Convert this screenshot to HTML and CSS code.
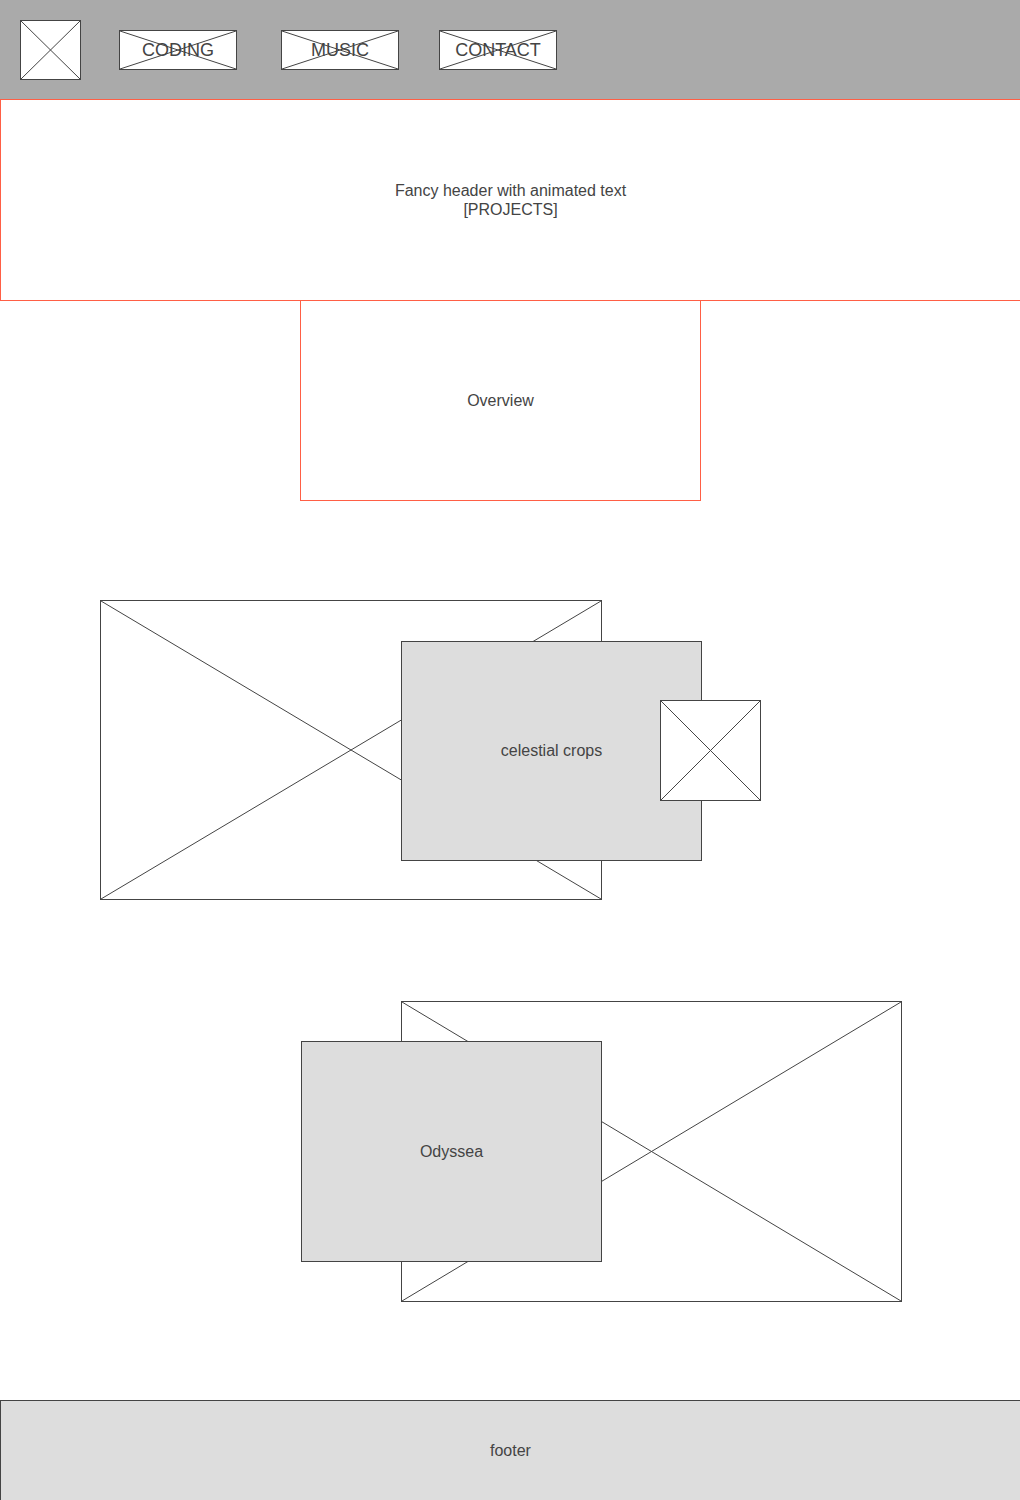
FILE: index.html
```html
<!DOCTYPE html>
<html lang="en">
<head>
    <meta charset="UTF-8">
    <meta name="viewport" content="width=device-width, initial-scale=1.0">
    <title>Projects</title>
    <link rel="stylesheet" href="styles.css">
</head>
<body>
    <nav class="nav">
        <a href="#" class="logo">
            <svg class="cross" viewBox="0 0 10 10" preserveAspectRatio="none"><line x1="0" y1="0" x2="10" y2="10"/><line x1="10" y1="0" x2="0" y2="10"/></svg>
        </a>
        <a href="#" class="nav-btn">
            <svg class="cross" viewBox="0 0 10 10" preserveAspectRatio="none"><line x1="0" y1="0" x2="10" y2="10"/><line x1="10" y1="0" x2="0" y2="10"/></svg>
            <span>CODING</span>
        </a>
        <a href="#" class="nav-btn">
            <svg class="cross" viewBox="0 0 10 10" preserveAspectRatio="none"><line x1="0" y1="0" x2="10" y2="10"/><line x1="10" y1="0" x2="0" y2="10"/></svg>
            <span>MUSIC</span>
        </a>
        <a href="#" class="nav-btn">
            <svg class="cross" viewBox="0 0 10 10" preserveAspectRatio="none"><line x1="0" y1="0" x2="10" y2="10"/><line x1="10" y1="0" x2="0" y2="10"/></svg>
            <span>CONTACT</span>
        </a>
    </nav>

    <header class="hero">
        <p>Fancy header with animated text<br>[PROJECTS]</p>
    </header>

    <section class="overview">
        <p>Overview</p>
    </section>

    <!-- project cards -->
    <section class="project project-left">
        <div class="shot">
            <svg class="cross" viewBox="0 0 10 10" preserveAspectRatio="none"><line x1="0" y1="0" x2="10" y2="10"/><line x1="10" y1="0" x2="0" y2="10"/></svg>
            <div class="caption">celestial crops</div>
            <div class="thumb">
                <svg class="cross" viewBox="0 0 10 10" preserveAspectRatio="none"><line x1="0" y1="0" x2="10" y2="10"/><line x1="10" y1="0" x2="0" y2="10"/></svg>
            </div>
        </div>
    </section>

    <section class="project project-right">
        <div class="shot">
            <svg class="cross" viewBox="0 0 10 10" preserveAspectRatio="none"><line x1="0" y1="0" x2="10" y2="10"/><line x1="10" y1="0" x2="0" y2="10"/></svg>
            <div class="caption">Odyssea</div>
        </div>
    </section>

    <footer class="footer">footer</footer>
</body>
</html>
```

FILE: styles.css
```css
body {
    font-family: "Liberation Sans", Arial, sans-serif;
    margin: 0;
    color: #444;
    background: #fff;
    overflow-x: hidden;
}
p {
    margin: 0;
}
.cross {
    position: absolute;
    inset: 0;
    width: 100%;
    height: 100%;
}
.cross line {
    stroke: #444;
    stroke-width: 1;
    vector-effect: non-scaling-stroke;
}

.nav {
    height: 99px;
    background: #aaa;
    display: flex;
    align-items: center;
    padding-left: 20px;
    box-sizing: border-box;
}
.logo {
    position: relative;
    width: 61px;
    height: 60px;
    box-sizing: border-box;
    border: 1px solid #444;
    background: #fff;
    margin-right: 38px;
    margin-top: 1px;
}
.nav-btn {
    position: relative;
    width: 118px;
    height: 40px;
    box-sizing: border-box;
    border: 1px solid #444;
    background: #fff;
    display: flex;
    align-items: center;
    justify-content: center;
    color: #444;
    font-size: 18px;
    text-decoration: none;
    margin-right: 44px;
}
.nav-btn:nth-child(3) {
    margin-right: 40px;
}
.nav-btn span {
    position: relative;
    top: 1px;
}

.hero {
    width: 1020px;
    height: 202px;
    box-sizing: border-box;
    border: 1px solid #ff5f45;
    border-right: none;
    display: flex;
    align-items: center;
    justify-content: center;
    text-align: center;
    font-size: 16px;
    line-height: 19px;
}

.overview {
    width: 401px;
    height: 201px;
    box-sizing: border-box;
    margin: -1px 0 0 300px;
    border: 1px solid #ff5f45;
    display: flex;
    align-items: center;
    justify-content: center;
    font-size: 16px;
}

.project {
    margin-top: 99px;
}
.project-right {
    margin-top: 101px;
}
.shot {
    position: relative;
    width: 502px;
    height: 300px;
    box-sizing: border-box;
    border: 1px solid #444;
    background: #fff;
}
.project-left .shot {
    margin-left: 100px;
}
.project-right .shot {
    margin-left: 401px;
    width: 501px;
    height: 301px;
}
.caption {
    position: absolute;
    width: 301px;
    height: 220px;
    box-sizing: border-box;
    border: 1px solid #444;
    background: #ddd;
    display: flex;
    align-items: center;
    justify-content: center;
    font-size: 16px;
}
.project-left .caption {
    left: 300px;
    top: 40px;
}
.project-right .caption {
    left: -101px;
    top: 39px;
    height: 221px;
}
.thumb {
    position: absolute;
    left: 559px;
    top: 99px;
    width: 101px;
    height: 101px;
    box-sizing: border-box;
    border: 1px solid #444;
    background: #fff;
}

.footer {
    margin-top: 98px;
    width: 1030px;
    height: 110px;
    box-sizing: border-box;
    border-top: 1px solid #444;
    border-left: 1px solid #444;
    background: #ddd;
    padding: 40px 0 0 0;
    text-indent: 489px;
    font-size: 16px;
    line-height: 19px;
}
```
